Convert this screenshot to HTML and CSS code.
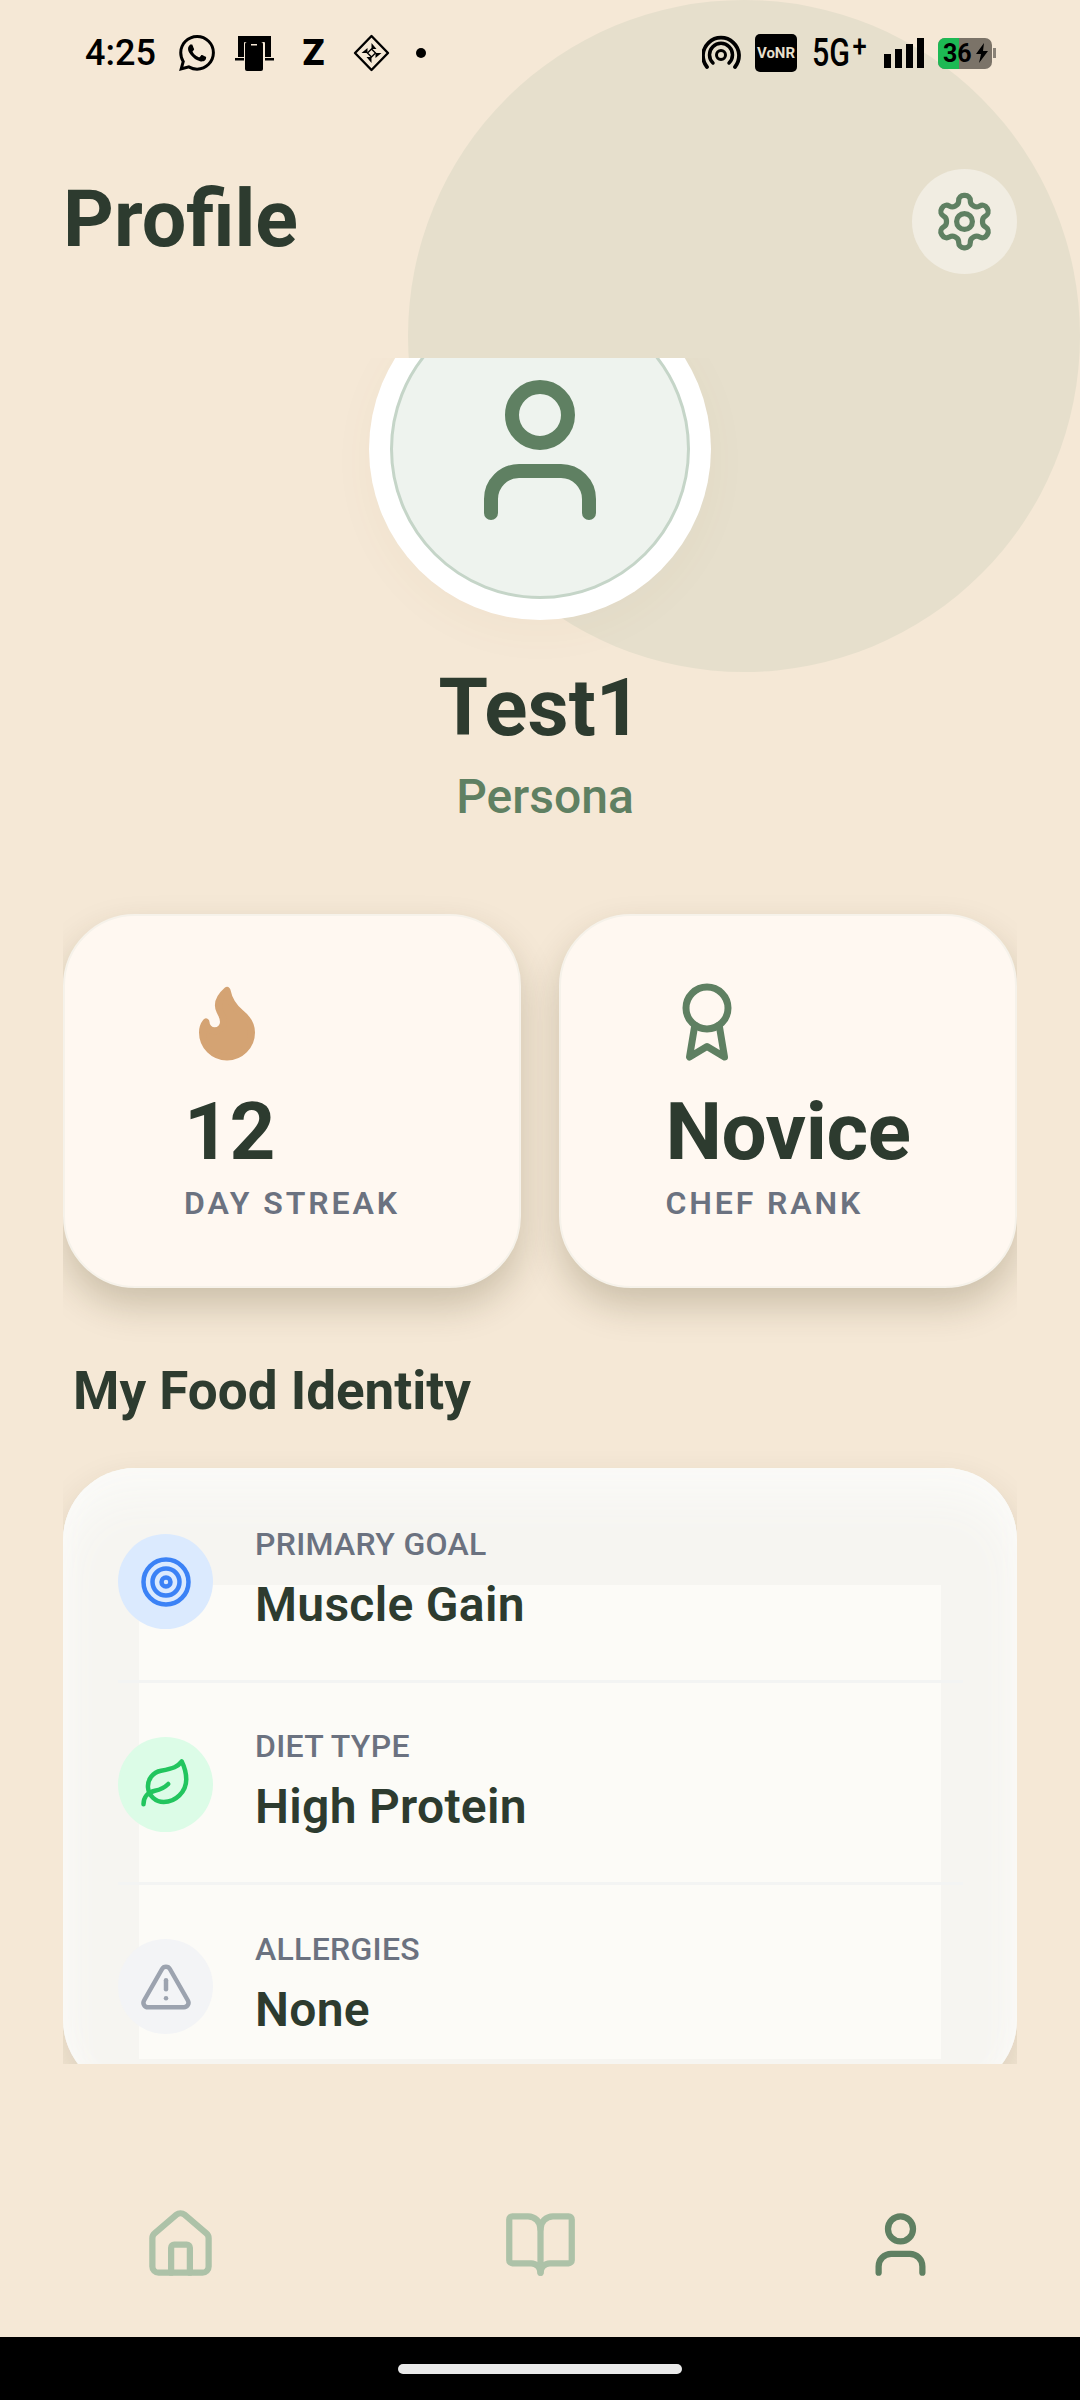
FILE: index.html
```html
<!DOCTYPE html>
<html lang="en">
<head>
<meta charset="UTF-8" />
<title>Profile</title>
<link rel="stylesheet" href="styles.css">
</head>
<body>
<div class="screen">
	<div class="blob"></div>

	<div class="status">
		<span class="time">4:25</span>
		<svg class="st-wa" width="36" height="36" viewBox="0 0 24 24" fill="#000"><path d="M17.472 14.382c-.297-.149-1.758-.867-2.03-.967-.273-.099-.471-.148-.67.15-.197.297-.767.966-.94 1.164-.173.199-.347.223-.644.075-.297-.15-1.255-.463-2.39-1.475-.883-.788-1.48-1.761-1.653-2.059-.173-.297-.018-.458.13-.606.134-.133.298-.347.446-.52.149-.174.198-.298.298-.497.099-.198.05-.371-.025-.52-.075-.149-.669-1.612-.916-2.207-.242-.579-.487-.5-.669-.51-.173-.008-.371-.01-.57-.01-.198 0-.52.074-.792.372-.272.297-1.04 1.016-1.04 2.479 0 1.462 1.065 2.875 1.213 3.074.149.198 2.096 3.2 5.077 4.487.709.306 1.262.489 1.694.625.712.227 1.36.195 1.871.118.571-.085 1.758-.719 2.006-1.413.248-.694.248-1.289.173-1.413-.074-.124-.272-.198-.57-.347m-5.421 7.403h-.004a9.87 9.87 0 01-5.031-1.378l-.361-.214-3.741.982.998-3.648-.235-.374a9.86 9.86 0 01-1.51-5.26c.001-5.45 4.436-9.884 9.888-9.884 2.64 0 5.122 1.03 6.988 2.898a9.825 9.825 0 012.893 6.994c-.003 5.45-4.437 9.884-9.885 9.884m8.413-18.297A11.815 11.815 0 0012.05 0C5.495 0 .16 5.335.157 11.892c0 2.096.547 4.142 1.588 5.945L.057 24l6.305-1.654a11.882 11.882 0 005.683 1.448h.005c6.554 0 11.89-5.335 11.893-11.893a11.821 11.821 0 00-3.48-8.413Z"/></svg>
		<svg class="st-phone" width="39" height="36" viewBox="0 0 39 36"><path d="M3 1h33v21h-6V8a1 1 0 0 0-1-1H10a1 1 0 0 0-1 1v14H3z" fill="#000"/><rect x="0" y="23" width="9" height="2.5" fill="#000"/><rect x="30" y="23" width="9" height="2.5" fill="#000"/><rect x="10" y="7" width="18" height="29" rx="2" fill="#000"/><rect x="16" y="9" width="6" height="1.5" fill="#f5e8d6"/></svg>
		<span class="st-z">Z</span>
		<svg class="st-diamond" width="37" height="38" viewBox="0 0 37 38"><path d="M18.5 2 35 19 18.5 36 2 19Z" fill="none" stroke="#000" stroke-width="2.4" stroke-linejoin="round"/><path d="M18.5 9l5 6h-5zM8.500 19l6-5v5zM28.500 19l-6 5v-5zM18.500 29l-5-6h5z" fill="#000"/><path d="M18.500 15l4 4-4 4-4-4z" fill="none" stroke="#000" stroke-width="1.400"/></svg>
		<span class="st-dot"></span>

		<svg class="st-hotspot" width="39" height="34" viewBox="0 0 39 34" fill="none" stroke="#000" stroke-linecap="round"><circle cx="19" cy="20" r="4.500" stroke-width="3"/><path d="M11 28a11.500 11.500 0 1 1 16 0" stroke-width="3.500"/><path d="M5 32a18 18 0 1 1 28 0" stroke-width="3.800"/></svg>
		<span class="st-vonr">VoNR</span>
		<span class="st-5g">5G<sup>+</sup></span>
		<span class="st-signal"><i class="b1"></i><i class="b2"></i><i class="b3"></i><i class="b4"></i></span>
		<span class="st-batt">
			<span class="batt-fill"></span>
			<span class="batt-num">36</span>
			<svg class="batt-bolt" width="14" height="20" viewBox="0 0 14 20" fill="#000"><path d="M9 0 1 11h5l-2 9 9-12H8z"/></svg>
		</span>
		<span class="batt-nub"></span>
	</div>

	<div class="header">
		<h1 class="title">Profile</h1>
		<div class="settings">
			<svg class="ic" width="63" height="63" viewBox="0 0 24 24"><path d="M12.220 2h-.44a2 2 0 0 0-2 2v.18a2 2 0 0 1-1 1.730l-.43.25a2 2 0 0 1-2 0l-.15-.08a2 2 0 0 0-2.730.73l-.22.38a2 2 0 0 0 .73 2.730l.15.1a2 2 0 0 1 1 1.720v.51a2 2 0 0 1-1 1.740l-.15.09a2 2 0 0 0-.73 2.730l.22.38a2 2 0 0 0 2.730.73l.15-.08a2 2 0 0 1 2 0l.43.25a2 2 0 0 1 1 1.730V20a2 2 0 0 0 2 2h.44a2 2 0 0 0 2-2v-.18a2 2 0 0 1 1-1.730l.43-.25a2 2 0 0 1 2 0l.15.08a2 2 0 0 0 2.730-.73l.22-.39a2 2 0 0 0-.73-2.730l-.15-.08a2 2 0 0 1-1-1.740v-.5a2 2 0 0 1 1-1.740l.15-.09a2 2 0 0 0 .73-2.730l-.22-.38a2 2 0 0 0-2.730-.73l-.15.08a2 2 0 0 1-2 0l-.43-.25a2 2 0 0 1-1-1.730V4a2 2 0 0 0-2-2z"/><circle cx="12" cy="12" r="3"/></svg>
		</div>
	</div>

	<div class="scroll">
		<div class="avatar">
			<div class="avatar-in">
				<svg class="ic" width="168" height="168" viewBox="0 0 24 24"><path d="M19 21v-2a4 4 0 0 0-4-4H9a4 4 0 0 0-4 4v2"/><circle cx="12" cy="7" r="4"/></svg>
			</div>
		</div>
		<div class="name">Test1</div>
		<div class="role">Persona</div>

		<div class="stats">
			<div class="stat">
				<div class="stat-body">
					<svg class="stat-ic flame" width="84" height="84" viewBox="0 0 24 24"><path d="M8.500 14.500A2.500 2.500 0 0 0 11 12c0-1.380-.5-2-1-3-1.072-2.143-.224-4.054 2-6 .5 2.500 2 4.900 4 6.500 2 1.600 3 3.500 3 5.500a7 7 0 1 1-14 0c0-1.153.433-2.294 1-3a2.500 2.500 0 0 0 2.500 2.500z"/></svg>
					<div class="stat-num">12</div>
					<div class="stat-label">DAY STREAK</div>
				</div>
			</div>
			<div class="stat">
				<div class="stat-body">
					<svg class="stat-ic ic" width="84" height="84" viewBox="0 0 24 24"><path d="M15.477 12.890 17 22l-5-3-5 3 1.523-9.110"/><circle cx="12" cy="8" r="6"/></svg>
					<div class="stat-num">Novice</div>
					<div class="stat-label">CHEF RANK</div>
				</div>
			</div>
		</div>

		<h2 class="section">My Food Identity</h2>

		<div class="list">
			<div class="row">
				<div class="badge blue">
					<svg width="54" height="54" viewBox="0 0 24 24"><circle cx="12" cy="12" r="10"/><circle cx="12" cy="12" r="6"/><circle cx="12" cy="12" r="2"/></svg>
				</div>
				<div class="row-text">
					<div class="row-label">PRIMARY GOAL</div>
					<div class="row-value">Muscle Gain</div>
				</div>
			</div>
			<div class="row">
				<div class="badge green">
					<svg width="54" height="54" viewBox="0 0 24 24"><path d="M11 20A7 7 0 0 1 9.800 6.100C15.500 5 17 4.480 19 2c1 2 2 4.180 2 8 0 5.500-4.780 10-10 10Z"/><path d="M2 21c0-3 1.850-5.360 5.080-6C9.500 14.520 12 13 13 12"/></svg>
				</div>
				<div class="row-text">
					<div class="row-label">DIET TYPE</div>
					<div class="row-value">High Protein</div>
				</div>
			</div>
			<div class="row last">
				<div class="badge grey">
					<svg width="54" height="54" viewBox="0 0 24 24"><path d="m21.730 18-8-14a2 2 0 0 0-3.480 0l-8 14A2 2 0 0 0 4 21h16a2 2 0 0 0 1.730-3"/><path d="M12 9v4"/><path d="M12 17h.01"/></svg>
				</div>
				<div class="row-text">
					<div class="row-label">ALLERGIES</div>
					<div class="row-value">None</div>
				</div>
			</div>
		</div>
	</div>

	<div class="nav">
		<div class="nav-item off">
			<svg class="ic" width="75" height="75" viewBox="0 0 24 24"><path d="M15 21v-8a1 1 0 0 0-1-1h-4a1 1 0 0 0-1 1v8"/><path d="M3 10a2 2 0 0 1 .709-1.528l7-5.999a2 2 0 0 1 2.582 0l7 5.999A2 2 0 0 1 21 10v9a2 2 0 0 1-2 2H5a2 2 0 0 1-2-2z"/></svg>
		</div>
		<div class="nav-item off">
			<svg class="ic" width="75" height="75" viewBox="0 0 24 24"><path d="M12 7v14"/><path d="M3 18a1 1 0 0 1-1-1V4a1 1 0 0 1 1-1h5a4 4 0 0 1 4 4 4 4 0 0 1 4-4h5a1 1 0 0 1 1 1v13a1 1 0 0 1-1 1h-6a3 3 0 0 0-3 3 3 3 0 0 0-3-3z"/></svg>
		</div>
		<div class="nav-item">
			<svg class="ic" width="75" height="75" viewBox="0 0 24 24"><path d="M19 21v-2a4 4 0 0 0-4-4H9a4 4 0 0 0-4 4v2"/><circle cx="12" cy="7" r="4"/></svg>
		</div>
	</div>

	<div class="homebar"><span class="pill"></span></div>
</div>
</body>
</html>
```
FILE: styles.css
```css
* {
	box-sizing: border-box;
}
body {
	margin: 0;
	font-family: Roboto, "Liberation Sans", sans-serif;
	color: #2d3b2f;
}
.screen {
	position: relative;
	width: 1080px;
	height: 2400px;
	background-color: #f5e8d6;
	display: flex;
	flex-direction: column;
	overflow: hidden;
}
.blob {
	position: absolute;
	top: 0;
	right: 0;
	width: 672px;
	height: 672px;
	border-radius: 50%;
	background-color: #e6dfcc;
}
.ic {
	fill: none;
	stroke: #5f8062;
	stroke-width: 2;
	stroke-linecap: round;
	stroke-linejoin: round;
}

/* status bar */
.status {
	position: relative;
	height: 106px;
	padding-left: 85px;
	display: flex;
	align-items: center;
	color: #000;
}
.time {
	font-size: 36px;
	font-weight: 500;
	margin-right: 23px;
}
.st-phone {
	margin-left: 20px;
}
.st-z {
	margin-left: 28px;
	width: 23px;
	font-size: 36px;
	font-weight: 900;
	text-align: center;
}
.st-diamond {
	margin-left: 28px;
}
.st-dot {
	width: 10px;
	height: 10px;
	margin-left: 26px;
	border-radius: 50%;
	background-color: #000;
}
.st-hotspot {
	margin: -3px 0 0 auto;
}
.st-vonr {
	width: 42px;
	height: 38px;
	margin-left: 14px;
	border-radius: 5px;
	background-color: #000;
	color: #e6dfcc;
	font-size: 15px;
	font-weight: 700;
	line-height: 38px;
	text-align: center;
}
.st-5g {
	width: 56px;
	margin-left: 15px;
	font-size: 38px;
	font-weight: 500;
	white-space: nowrap;
	transform: scaleX(0.8);
	transform-origin: left center;
}
.st-5g sup {
	font-size: 32px;
	line-height: 0;
	vertical-align: 9px;
	margin-left: 3px;
}
.st-signal {
	height: 30px;
	margin-left: 16px;
	display: flex;
	align-items: flex-end;
	gap: 4px;
}
.st-signal i {
	width: 7px;
	background-color: #000;
}
.b1 { height: 14px; }
.b2 { height: 19px; }
.b3 { height: 24px; }
.b4 { height: 30px; }
.st-batt {
	position: relative;
	width: 54px;
	height: 31px;
	margin-left: 14px;
	border-radius: 7px;
	background-color: #7b7368;
	overflow: hidden;
	display: flex;
	align-items: center;
}
.batt-fill {
	position: absolute;
	left: 0;
	top: 0;
	bottom: 0;
	width: 21px;
	background-color: #1db954;
}
.batt-num {
	position: relative;
	margin-left: 5px;
	font-size: 25px;
	font-weight: 700;
	line-height: 31px;
}
.batt-bolt {
	position: relative;
	margin-left: 3px;
}
.batt-nub {
	width: 3px;
	height: 10px;
	margin: 0 84px 0 1px;
	background-color: #8a8378;
}

/* header */
.header {
	position: relative;
	padding: 63px 63px 84px;
	display: flex;
	justify-content: space-between;
	align-items: center;
}
.title {
	margin: 0 0 4px;
	font-size: 79px;
	font-weight: 700;
	line-height: 93px;
}
.settings {
	width: 105px;
	height: 105px;
	border-radius: 50%;
	background-color: #f1ede2;
	display: flex;
	align-items: center;
	justify-content: center;
}

/* scrolling area, it cuts off the avatar and the card shadows */
.scroll {
	position: relative;
	height: 1706px;
	margin: 0 63px;
	overflow: hidden;
	display: flex;
	flex-direction: column;
	align-items: center;
	flex-shrink: 0;
}
.avatar {
	width: 342px;
	height: 342px;
	margin-top: -80px;
	flex-shrink: 0;
	border-radius: 50%;
	background-color: #fff;
	padding: 21px;
	box-shadow: 0 12px 45px rgba(120, 100, 60, 0.04);
}
.avatar-in {
	width: 300px;
	height: 300px;
	padding-top: 2px;
	border-radius: 50%;
	background-color: #eef3ee;
	border: 3px solid #c5d5c8;
	display: flex;
	align-items: center;
	justify-content: center;
}
.name {
	margin-top: 41px;
	font-size: 80px;
	font-weight: 700;
	line-height: 94px;
}
.role {
	margin-top: 14px;
	padding-left: 10px;
	font-size: 48px;
	font-weight: 500;
	line-height: 56px;
	color: #5f8062;
}

.stats {
	width: 100%;
	margin-top: 89px;
	display: flex;
	gap: 38px;
	flex-shrink: 0;
}
.stat {
	flex: 1;
	height: 374px;
	border-radius: 72px;
	background-color: #fff8f1;
	border: 2px solid #f6f2ea;
	box-shadow: 0 18px 36px rgba(60, 50, 15, 0.22);
	display: flex;
	align-items: center;
	justify-content: center;
}
.stat-ic {
	display: block;
}
.flame {
	fill: #d4a373;
	stroke: #d4a373;
	stroke-width: 2;
	stroke-linejoin: round;
	margin-left: 1px;
}
.stat-num {
	margin-top: 21px;
	font-size: 80px;
	font-weight: 700;
	line-height: 94px;
	letter-spacing: -0.4px;
}
.stat-label {
	margin-top: 5px;
	font-size: 32px;
	font-weight: 600;
	line-height: 38px;
	letter-spacing: 2.9px;
	color: #6b7280;
}

.section {
	width: 100%;
	margin: 72px 0 46px;
	padding-left: 10px;
	font-size: 53px;
	font-weight: 700;
	line-height: 62px;
}

.list {
	position: relative;
	width: 100%;
	height: 624px;
	flex-shrink: 0;
	padding: 12px 54px 0 55px;
	border-radius: 72px;
	background-color: #f6f5f1;
	box-shadow: 0 16px 36px rgba(60, 50, 15, 0.14), inset 0 0 24px #fbfaf8, inset 0 30px 40px #fafaf7;
}
.list::before {
	content: "";
	position: absolute;
	left: 76px;
	right: 76px;
	top: 117px;
	bottom: 33px;
	background-color: #fcfbf7;
}
.row {
	position: relative;
	height: 202.5px;
	padding-top: 4px;
	display: flex;
	align-items: center;
	gap: 42px;
	border-bottom: 3px solid #f3f4f3;
}
.row.last {
	border-bottom-color: transparent;
}
.badge {
	width: 95px;
	height: 95px;
	flex-shrink: 0;
	border-radius: 50%;
	display: flex;
	align-items: center;
	justify-content: center;
}
.badge svg {
	fill: none;
	stroke-width: 2;
	stroke-linecap: round;
	stroke-linejoin: round;
}
.blue { background-color: #dbeafe; }
.blue svg { stroke: #3b82f6; }
.green { background-color: #dcfce7; }
.green svg { stroke: #22c55e; }
.grey { background-color: #f3f4f6; }
.grey svg { stroke: #9ca3af; }
.row-text {
	margin-bottom: 5px;
}
.row-label {
	font-size: 32px;
	font-weight: 500;
	line-height: 37px;
	letter-spacing: 0.3px;
	color: #6b7280;
}
.row-value {
	margin-top: 14px;
	font-size: 48px;
	font-weight: 600;
	line-height: 56px;
	letter-spacing: 0.3px;
}

/* bottom nav */
.nav {
	position: relative;
	flex: 1;
	padding-top: 143px;
	display: flex;
}
.nav-item {
	flex: 1;
	display: flex;
	justify-content: center;
}
.off svg {
	stroke: #adc2a8;
}
.homebar {
	height: 63px;
	background-color: #000;
	display: flex;
	align-items: center;
	justify-content: center;
}
.pill {
	width: 284px;
	height: 10px;
	border-radius: 5px;
	background-color: #eaeaea;
}
```
